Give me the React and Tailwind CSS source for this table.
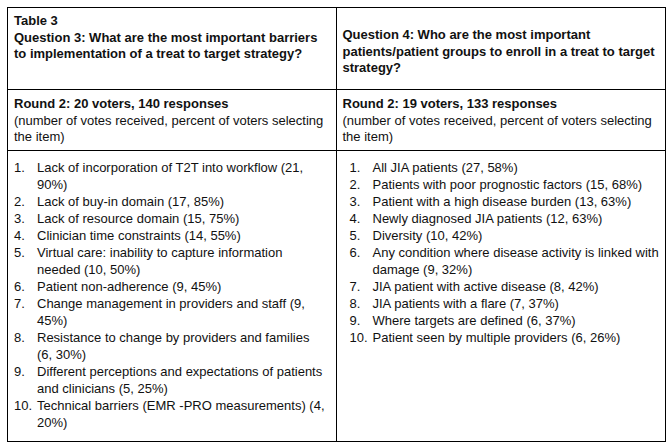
import React from "react";

const left = [
  "Lack of incorporation of T2T into workflow (21, 90%)",
  "Lack of buy-in domain (17, 85%)",
  "Lack of resource domain (15, 75%)",
  "Clinician time constraints (14, 55%)",
  "Virtual care: inability to capture information needed (10, 50%)",
  "Patient non-adherence (9, 45%)",
  "Change management in providers and staff (9, 45%)",
  "Resistance to change by providers and families (6, 30%)",
  "Different perceptions and expectations of patients and clinicians (5, 25%)",
  "Technical barriers (EMR -PRO measurements) (4, 20%)",
];

const right = [
  "All JIA patients (27, 58%)",
  "Patients with poor prognostic factors (15, 68%)",
  "Patient with a high disease burden (13, 63%)",
  "Newly diagnosed JIA patients (12, 63%)",
  "Diversity (10, 42%)",
  "Any condition where disease activity is linked with damage (9, 32%)",
  "JIA patient with active disease (8, 42%)",
  "JIA patients with a flare (7, 37%)",
  "Where targets are defined (6, 37%)",
  "Patient seen by multiple providers (6, 26%)",
];

function List({ items }) {
  return (
    <ol className="flex flex-col leading-[17px]">
      {items.map((t, i) => (
        <li key={i} className="flex">
          <span className="w-[23px] shrink-0">{i + 1}.</span>
          <span className="flex-1">{t}</span>
        </li>
      ))}
    </ol>
  );
}

export default function App() {
  return (
    <div className="w-[672px] h-[448px] bg-white pt-[7px] pl-[7px] font-['Liberation_Sans',Arial,sans-serif] text-[13px] leading-[16.5px] text-[#111]">
      <div className="w-[659px] h-[435px] border border-black grid grid-cols-2 grid-rows-[82px_61px_1fr]">
        <div className="border-r border-b border-black pl-[6px] pr-[4px] pt-[5px] font-bold">
          <div>Table 3</div>
          <div>Question 3: What are the most important barriers to implementation of a treat to target strategy?</div>
        </div>
        <div className="border-b border-black pl-[6px] pr-[4px] pt-[19px] font-bold">
          Question 4: Who are the most important patients/patient groups to enroll in a treat to target strategy?
        </div>
        <div className="border-r border-b border-black pl-[6px] pr-[4px] pt-[6px]">
          <div className="font-bold">Round 2: 20 voters, 140 responses</div>
          <div>(number of votes received, percent of voters selecting the item)</div>
        </div>
        <div className="border-b border-black pl-[6px] pr-[4px] pt-[6px]">
          <div className="font-bold">Round 2: 19 voters, 133 responses</div>
          <div>(number of votes received, percent of voters selecting the item)</div>
        </div>
        <div className="border-r border-black pl-[6px] pr-[10px] pt-[8px]">
          <List items={left} />
        </div>
        <div className="pl-[13px] pr-[3px] pt-[8px]">
          <List items={right} />
        </div>
      </div>
    </div>
  );
}
